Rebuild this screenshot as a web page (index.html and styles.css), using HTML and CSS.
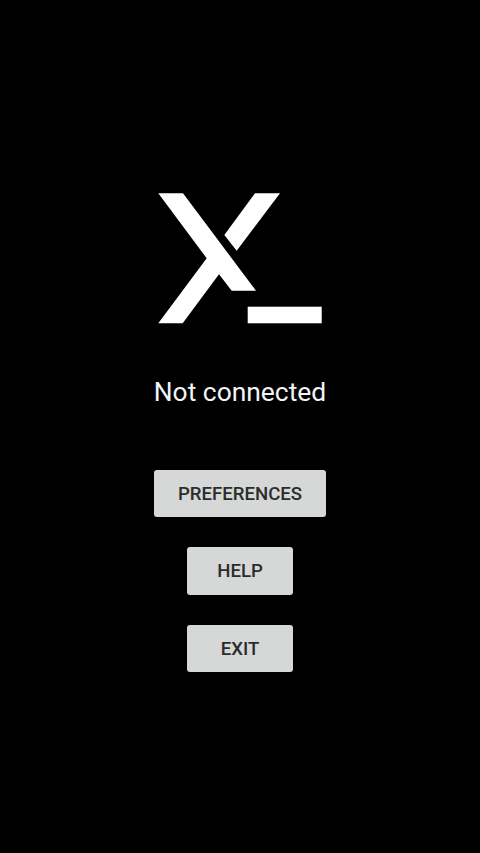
FILE: index.html
```html
<!DOCTYPE html>
<html lang="en">
<head>
<meta charset="utf-8">
<title>Not connected</title>
<link rel="stylesheet" href="styles.css">
</head>
<body>
<main class="screen">
  <svg class="logo" width="164" height="131" viewBox="158 193 164 131" aria-hidden="true">
    <path fill="#fff" d="M158.3 193.3H183L256 290.7H231.7L219 274.3L182.7 323.3H158.3L206.7 258.3Z"/>
    <path fill="#fff" d="M255 193.3H280L236.7 250.7L224.3 235Z"/>
    <rect fill="#fff" x="247.7" y="306.7" width="74" height="16.6"/>
  </svg>
  <p class="status">Not connected</p>
  <div class="actions">
    <button class="btn">PREFERENCES</button>
    <button class="btn btn-small">HELP</button>
    <button class="btn btn-small">EXIT</button>
  </div>
</main>
</body>
</html>
```

FILE: styles.css
```css
html, body {
  margin: 0;
  height: 100%;
  background: #000;
}
.screen {
  box-sizing: border-box;
  height: 853px;
  padding-top: 193px;
  display: flex;
  flex-direction: column;
  align-items: center;
  font-family: Roboto, sans-serif;
}
.logo {
  display: block;
  flex: none;
}
.status {
  margin: 51px 0 0;
  color: #f4f4f4;
  font-size: 26.4px;
  line-height: 34px;
}
.actions {
  margin-top: 60.8px;
  display: flex;
  flex-direction: column;
  align-items: center;
  gap: 29.8px;
}
.btn {
  width: 172px;
  height: 47.6px;
  padding: 1px 0 0;
  border: 0;
  border-radius: 3px;
  background: #d6d7d7;
  color: #2c2c2c;
  font-family: Roboto, sans-serif;
  font-size: 18.6px;
  font-weight: 500;
}
.btn-small {
  width: 106px;
}
```
